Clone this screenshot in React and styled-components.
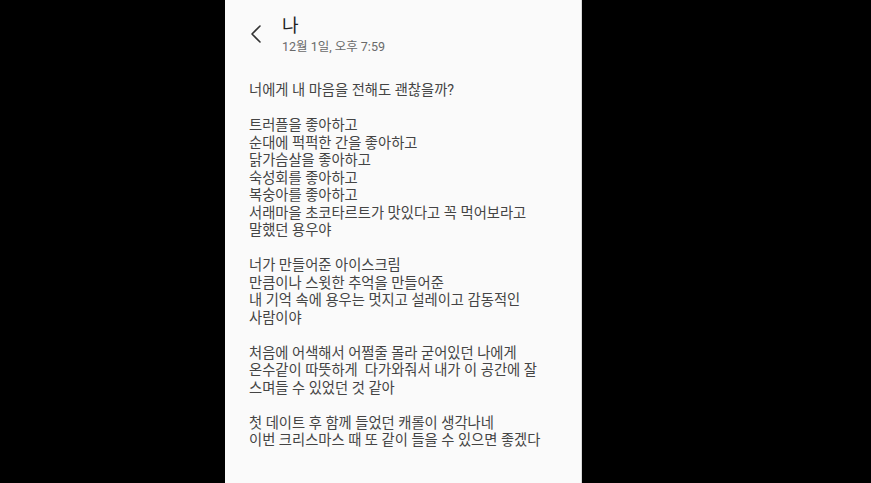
import React from 'react'
import styled, { createGlobalStyle } from 'styled-components'

const Global = createGlobalStyle`
  html, body { margin: 0; padding: 0; background: #000; }
  body { font-family: Roboto, "Noto Sans CJK KR", sans-serif; }
`

const Page = styled.div`
  display: flex;
  height: 483px;
  padding-left: 225px;
  background: #000;
`

const Panel = styled.div`
  width: 357px;
  height: 100%;
  background: #fafafa;
  box-sizing: border-box;
  padding: 15px 0 0 24px;
  border-right: 1px solid #d8d8d8;
`

const Header = styled.div`
  display: flex;
  align-items: flex-start;
  gap: 19px;
`

const Back = styled.button`
  border: 0;
  background: none;
  padding: 0;
  margin-top: 9px;
  width: 14px;
  height: 20px;
  display: flex;
  cursor: pointer;
`

const TitleBlock = styled.div`
  display: flex;
  flex-direction: column;
`

const Title = styled.div`
  font-family: Roboto, "Noto Sans CJK KR", sans-serif;
  font-size: 18px;
  line-height: 22px;
  color: #222;
`

const Meta = styled.div`
  font-family: Roboto, "Noto Sans CJK KR", sans-serif;
  font-size: 12.5px;
  line-height: 18px;
  color: #6a6a6a;
  margin-top: 1px;
`

const Body = styled.div`
  margin-top: 26px;
  font-family: Roboto, "Noto Sans CJK KR", sans-serif;
  font-size: 14.3px;
  line-height: 17.5px;
  color: #444;
  white-space: pre-wrap;
`

const text = `너에게 내 마음을 전해도 괜찮을까?

트러플을 좋아하고
순대에 퍽퍽한 간을 좋아하고
닭가슴살을 좋아하고
숙성회를 좋아하고
복숭아를 좋아하고
서래마을 초코타르트가 맛있다고 꼭 먹어보라고
말했던 용우야

너가 만들어준 아이스크림
만큼이나 스윗한 추억을 만들어준
내 기억 속에 용우는 멋지고 설레이고 감동적인
사람이야

처음에 어색해서 어쩔줄 몰라 굳어있던 나에게
온수같이 따뜻하게  다가와줘서 내가 이 공간에 잘
스며들 수 있었던 것 같아

첫 데이트 후 함께 들었던 캐롤이 생각나네
이번 크리스마스 때 또 같이 들을 수 있으면 좋겠다`

export default function App() {
  return (
    <Page>
      <Global />
      <Panel>
        <Header>
          <Back aria-label="back">
            <svg width="14" height="20" viewBox="0 0 14 20">
              <path d="M11 2 L3 10 L11 18" fill="none" stroke="#333" strokeWidth="1.6" strokeLinecap="round" strokeLinejoin="round" />
            </svg>
          </Back>
          <TitleBlock>
            <Title>나</Title>
            <Meta>12월 1일, 오후 7:59</Meta>
          </TitleBlock>
        </Header>
        <Body>{text}</Body>
      </Panel>
    </Page>
  )
}
